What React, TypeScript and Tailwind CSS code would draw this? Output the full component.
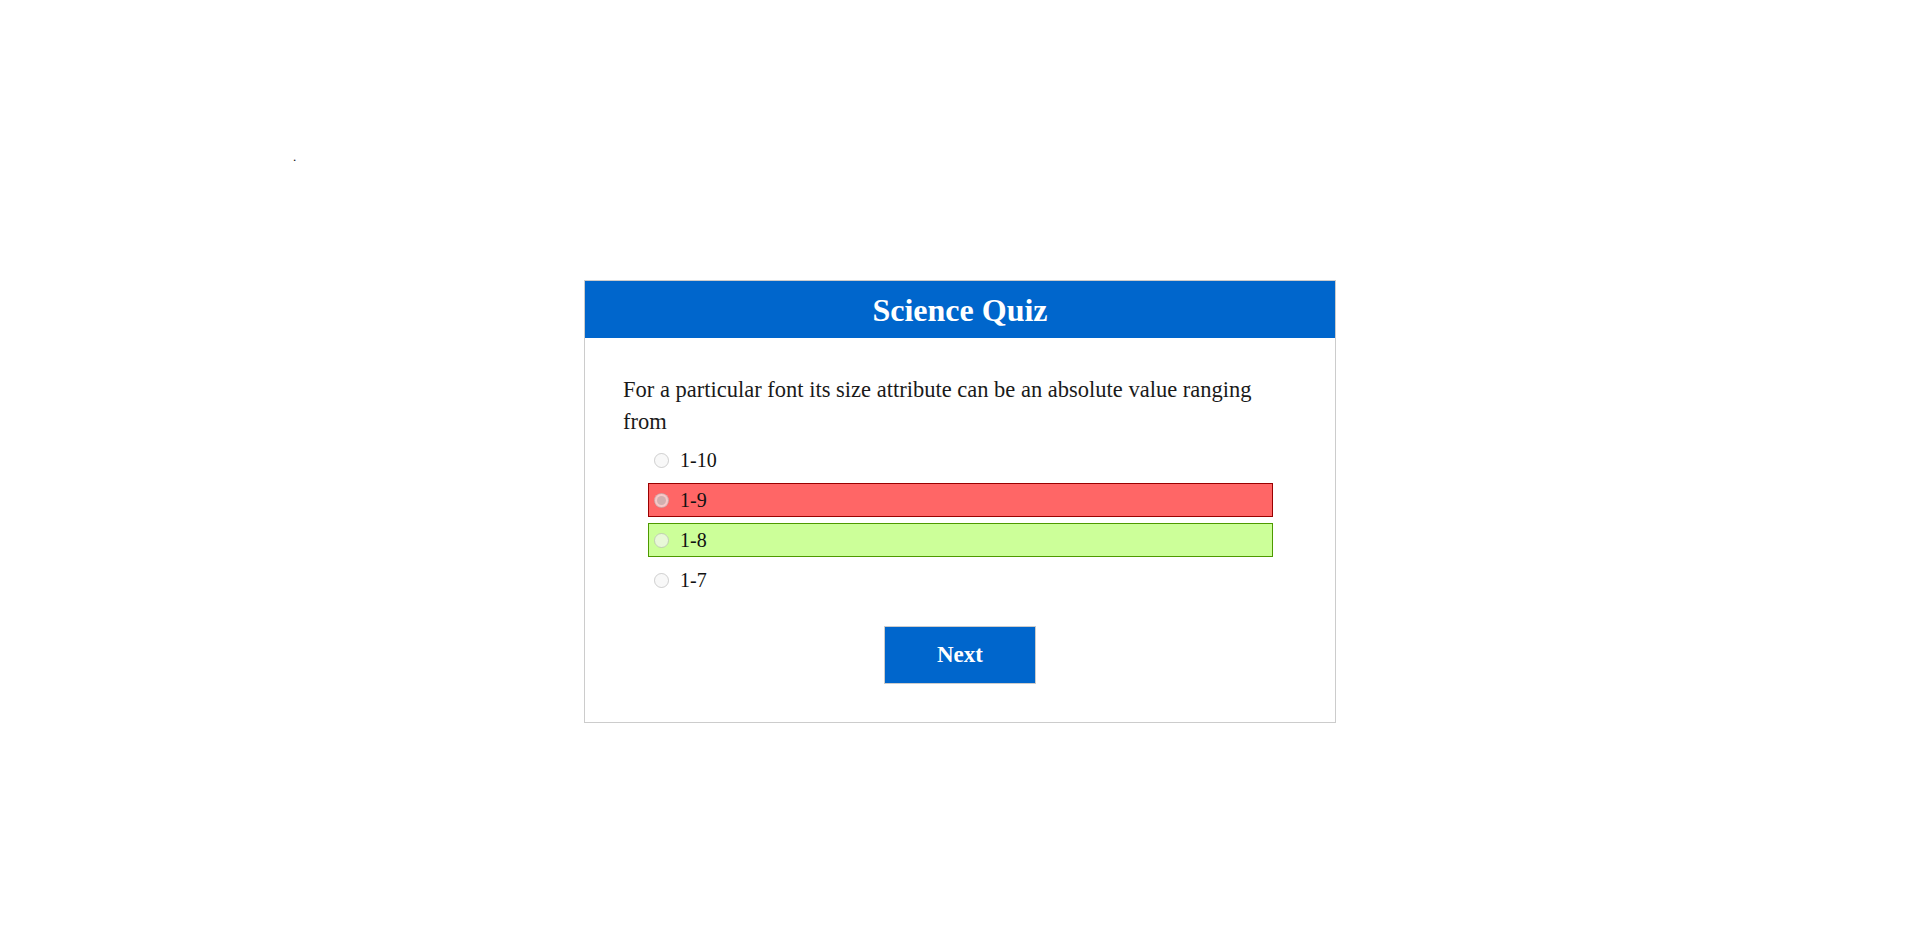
import { useState } from 'react'

interface Option {
    label: string
    state: 'none' | 'wrong' | 'right'
}

const options: Option[] = [
    { label: '1-10', state: 'none' },
    { label: '1-9', state: 'wrong' },
    { label: '1-8', state: 'right' },
    { label: '1-7', state: 'none' }
]

export default function App() {
    const [picked] = useState('1-9')

    return (
        <div className="min-h-screen bg-white text-[#111]" style={{ fontFamily: '"Liberation Serif", "Times New Roman", serif' }}>
            {/* stray dot */}
            <div className="pt-[149px] pl-[293px] h-[166px] text-[13px] leading-[16px]">.</div>

            <div className="mt-[114px] w-[752px] mx-auto border border-[#cccccc]">
                <div className="h-[57px] bg-[#0066cc] flex items-center justify-center">
                    <h1 className="text-white font-bold text-[32px] leading-none">Science Quiz</h1>
                </div>

                <div className="px-[38px] pt-[36px] pb-[38px]">
                    <p className="text-[22.5px] leading-[32px] text-[#1a1a1a]">
                        For a particular font its size attribute can be an absolute value ranging
                        <br />
                        from
                    </p>

                    <ul className="mt-[5px] ml-[25px] mr-[24px] flex flex-col gap-[6px]">
                        {options.map((opt) => (
                            <li
                                key={opt.label}
                                className={`h-[34px] flex items-center border ${
                                    opt.state === 'wrong'
                                        ? 'bg-[#ff6666] border-[#990000]'
                                        : opt.state === 'right'
                                        ? 'bg-[#ccff99] border-[#4d9900]'
                                        : 'border-transparent'
                                }`}
                            >
                                <input
                                    type="radio"
                                    name="answer"
                                    disabled
                                    readOnly
                                    checked={picked === opt.label}
                                    className="ml-[5px] mr-[11px] w-[15px] h-[15px]"
                                />
                                <span className="text-[20px] leading-none">{opt.label}</span>
                            </li>
                        ))}
                    </ul>

                    <button className="block mx-auto mt-[29px] w-[152px] h-[58px] border border-[#cccccc] bg-[#0066cc] text-white font-bold text-[23px]">
                        Next
                    </button>
                </div>
            </div>
        </div>
    )
}
